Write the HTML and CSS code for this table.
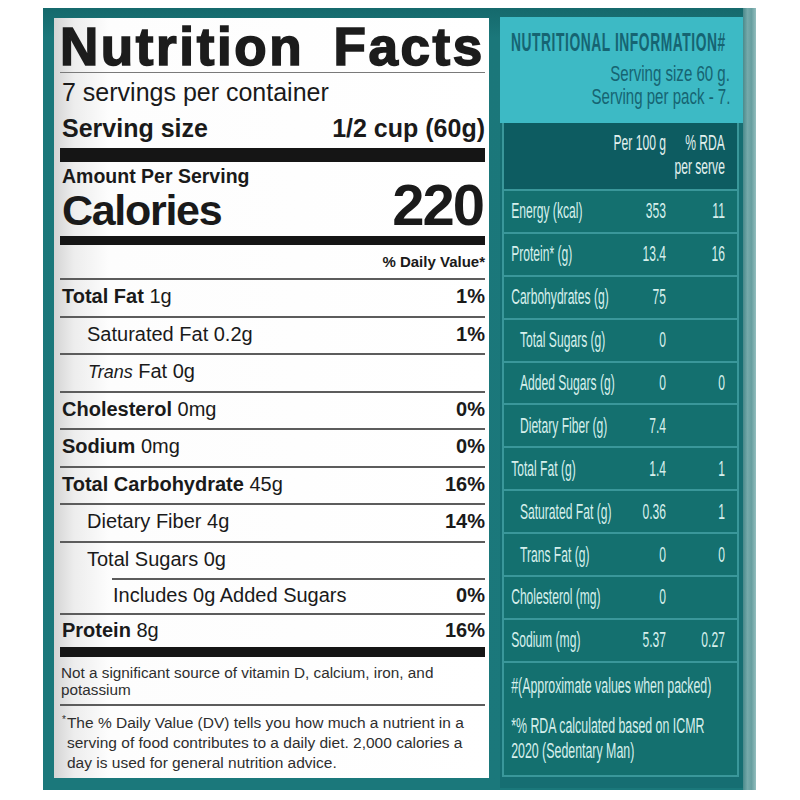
FILE: index.html
```html
<!DOCTYPE html>
<html lang="en">
<head>
<meta charset="utf-8">
<title>Nutrition Facts</title>
<link rel="stylesheet" href="styles.css">
</head>
<body>
<div class="pack">
  <section class="label">
    <h1 class="title">Nutrition Facts</h1>
    <div class="servings">7 servings per container</div>
    <div class="size"><span>Serving size</span><span>1/2 cup (60g)</span></div>
    <div class="cal">
      <div class="cal-left">
        <div class="amount">Amount Per Serving</div>
        <div class="cal-word">Calories</div>
      </div>
      <div class="cal-num">220</div>
    </div>
    <div class="dv-head">% Daily Value*</div>
    <div class="row"><span><b>Total Fat</b> 1g</span><b>1%</b></div>
    <div class="row ind1"><span>Saturated Fat 0.2g</span><b>1%</b></div>
    <div class="row ind1 trans"><span><i>Trans</i> Fat 0g</span></div>
    <div class="row"><span><b>Cholesterol</b> 0mg</span><b>0%</b></div>
    <div class="row"><span><b>Sodium</b> 0mg</span><b>0%</b></div>
    <div class="row"><span><b>Total Carbohydrate</b> 45g</span><b>16%</b></div>
    <div class="row ind1"><span>Dietary Fiber 4g</span><b>14%</b></div>
    <div class="row ind1"><span>Total Sugars 0g</span></div>
    <div class="row ind2"><span>Includes 0g Added Sugars</span><b>0%</b></div>
    <div class="row last"><span><b>Protein</b> 8g</span><b>16%</b></div>
    <p class="note1">Not a significant source of vitamin D, calcium, iron, and potassium</p>
    <p class="note2"><span class="ast">*</span>The % Daily Value (DV) tells you how much a nutrient in a serving of food contributes to a daily diet. 2,000 calories a day is used for general nutrition advice.</p>
  </section>

  <section class="rda">
    <header class="rda-top">
      <div class="rda-title"><span class="sx-title">Nutritional Information#</span></div>
      <div class="rda-serv first"><span class="sx-r">Serving size 60 g.</span></div>
      <div class="rda-serv"><span class="sx-r">Serving per pack - 7.</span></div>
    </header>
    <div class="rda-body">
      <div class="rda-scale">
        <div class="rrow rhead"><span></span><span>Per 100 g</span><span>% RDA<br>per serve</span></div>
        <div class="rrow"><span>Energy (kcal)</span><span>353</span><span>11</span></div>
        <div class="rrow"><span>Protein* (g)</span><span>13.4</span><span>16</span></div>
        <div class="rrow"><span>Carbohydrates (g)</span><span>75</span><span></span></div>
        <div class="rrow"><span class="rin">Total Sugars (g)</span><span>0</span><span></span></div>
        <div class="rrow"><span class="rin">Added Sugars (g)</span><span>0</span><span>0</span></div>
        <div class="rrow"><span class="rin">Dietary Fiber (g)</span><span>7.4</span><span></span></div>
        <div class="rrow"><span>Total Fat (g)</span><span>1.4</span><span>1</span></div>
        <div class="rrow"><span class="rin">Saturated Fat (g)</span><span>0.36</span><span>1</span></div>
        <div class="rrow"><span class="rin">Trans Fat (g)</span><span>0</span><span>0</span></div>
        <div class="rrow"><span>Cholesterol (mg)</span><span>0</span><span></span></div>
        <div class="rrow"><span>Sodium (mg)</span><span>5.37</span><span>0.27</span></div>
        <div class="rnotes">
          <p>#(Approximate values when packed)</p>
          <p>*% RDA calculated based on ICMR<br>2020 (Sedentary Man)</p>
        </div>
      </div>
    </div>
  </section>

  <div class="edge"></div>
</div>
</body>
</html>
```

FILE: styles.css
```css
* { box-sizing: border-box; margin: 0; padding: 0; }

body {
  background: #ffffff;
  font-family: "Liberation Sans", Arial, sans-serif;
  color: #1a1a1a;
}

.pack {
  display: flex;
  width: 713px;
  height: 782px;
  margin: 8px 0 0 43px;
  padding: 10px 0 2px 11px;
  background: linear-gradient(180deg, #15696c 0, #1b777a 30px, #1b787b 100%);
}

/* ---------- left: US nutrition facts ---------- */
.label {
  width: 435px;
  height: 760px;
  flex: none;
  align-self: flex-start;
  margin-right: 11px;
  padding: 4px 4px 0 6px;
  background: linear-gradient(90deg, #d4d4d4 0, #ededed 20px, #fdfdfd 55px, #ffffff 100%);
}

.title {
  font-size: 53px;
  line-height: 50px;
  font-weight: 700;
  letter-spacing: 2.6px;
  word-spacing: 12px;
  color: #1c1c1c;
  -webkit-text-stroke: 1.6px #1c1c1c;
  white-space: nowrap;
  border-bottom: 1px solid #7a7a7a;
}

.servings {
  font-size: 25px;
  line-height: 39px;
  padding-left: 2px;
}

.size {
  display: flex;
  justify-content: space-between;
  font-size: 25px;
  font-weight: 700;
  line-height: 32px;
  padding-left: 2px;
  margin-bottom: 4px;
}

.cal {
  height: 97px;
  border-top: 14px solid #151515;
  border-bottom: 9px solid #151515;
  display: flex;
  justify-content: space-between;
  align-items: flex-end;
  padding-left: 2px;
}

.amount {
  font-size: 19.5px;
  font-weight: 700;
  line-height: 28px;
}

.cal-word {
  font-size: 43px;
  font-weight: 700;
  line-height: 52px;
  margin-top: -6px;
  letter-spacing: -1.3px;
}

.cal-num {
  font-size: 58px;
  font-weight: 700;
  line-height: 62px;
  letter-spacing: -2px;
  margin-right: 2px;
}

.dv-head {
  font-size: 15px;
  font-weight: 700;
  line-height: 33px;
  text-align: right;
}

.row {
  display: flex;
  justify-content: space-between;
  height: 37.5px;
  line-height: 33.5px;
  font-size: 20px;
  border-top: 2px solid #5c5c5c;
  padding-left: 2px;
}

.row b { font-weight: 700; }
.row i { font-style: italic; font-size: 18px; }

.ind1 { padding-left: 27px; }
.trans { padding-left: 28px; }
.ind2 { margin-left: 52px; padding-left: 1px; height: 35px; line-height: 31px; }
.last { height: 34px; line-height: 31px; }

.note1 {
  border-top: 10px solid #151515;
  padding: 7px 0 6px 1px;
  font-size: 15.3px;
  line-height: 17px;
  color: #2e2e2e;
}

.note2 {
  border-top: 2px solid #5c5c5c;
  padding: 7px 6px 0 7px;
  font-size: 15.5px;
  line-height: 20px;
  text-indent: -5px;
  color: #2e2e2e;
}

.ast {
  font-size: 10px;
  vertical-align: top;
  line-height: 14px;
  margin-right: 1px;
}

/* ---------- right: Indian RDA panel ---------- */
.rda {
  width: 243px;
  flex: none;
  margin-top: -1px;
  display: flex;
  flex-direction: column;
  background: #166e72;
  overflow: hidden;
}

.rda-top {
  height: 106px;
  flex: none;
  background: #3dbac5;
  padding: 13px 13px 0 11px;
  color: #166472;
}

.rda-title {
  font-size: 25px;
  line-height: 24px;
  font-weight: 700;
  letter-spacing: 1px;
  text-transform: uppercase;
  white-space: nowrap;
}

.sx-title {
  display: inline-block;
  transform: scaleX(0.553);
  transform-origin: left center;
}

.rda-serv {
  text-align: right;
  font-size: 21.5px;
  line-height: 23px;
  white-space: nowrap;
}

.rda-serv.first { margin-top: 9px; }

.sx-r {
  display: inline-block;
  transform: scaleX(0.7);
  transform-origin: right center;
}

.rda-body {
  flex: 1;
  margin: 0 4px 11px 2px;
  border: 2px solid #3a979a;
  border-top: none;
  background: #14706f;
  overflow: hidden;
}

.rda-scale {
  width: 181.8%;
  transform: scaleX(0.55);
  transform-origin: 0 0;
  color: #d6efec;
  font-size: 22px;
}

.rrow {
  display: grid;
  grid-template-columns: minmax(0, 1fr) 110px 107px;
  align-items: center;
  height: 42.9px;
  padding: 0 22px 0 13px;
  border-top: 2px solid #3a979a;
  line-height: 1;
  white-space: nowrap;
}

.rrow > span:nth-child(n+2) { text-align: right; }

.rhead {
  height: 66px;
  border-top: none;
  align-items: start;
  padding-top: 8px;
  line-height: 24px;
  background: #0d5c61;
  color: #e2f1ef;
}

.rin { padding-left: 16px; }

.rnotes {
  border-top: 2px solid #3a979a;
  padding: 10px 0 12px 13px;
  font-size: 22.5px;
  line-height: 25px;
  white-space: nowrap;
}

.rnotes p + p { margin-top: 15px; }

.edge {
  width: 13px;
  flex: none;
  margin: -10px 0 -2px 0;
  background: linear-gradient(90deg, #4a8a8b 0, #76a9aa 35%, #689fa0 65%, #93bebe 100%);
}
```
